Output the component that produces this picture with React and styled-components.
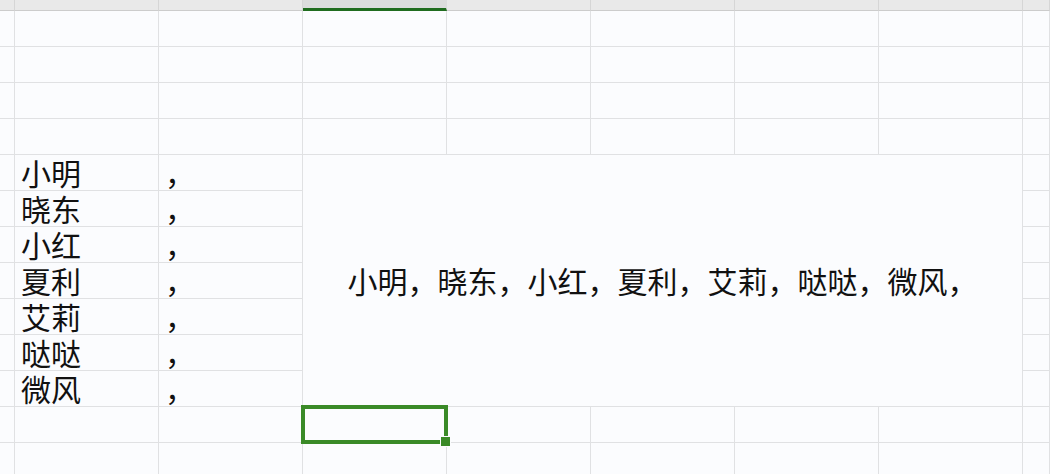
import React from "react";
import styled, { createGlobalStyle } from "styled-components";

const Global = createGlobalStyle`
  html, body { margin: 0; padding: 0; background: #fbfcfe; overflow: hidden; }
  body { font-family: "Noto Sans CJK SC", "Noto Sans", sans-serif; color: #111; }
`;

const COLS = 8; // A..H (H partial)
const ROWS = 13;

const Sheet = styled.div`
  display: grid;
  grid-template-columns: 15px repeat(7, 144px) 1fr;
  grid-template-rows: 11px repeat(${ROWS}, 36px);
  width: 1050px;
  height: 474px;
  overflow: hidden;
  background: #fbfcfe;
`;

const HeadCell = styled.div`
  box-sizing: border-box;
  background: ${(p) => (p.$active ? "#dcdddd" : "#e9e9e9")};
  border-right: 1px solid ${(p) => (p.$active ? "#dcdddd" : "#d6d6d6")};
  border-bottom: ${(p) => (p.$active ? "3px solid #1f6c1f" : "1px solid #cccccc")};
`;

const Cell = styled.div`
  box-sizing: border-box;
  position: relative;
  display: flex;
  align-items: center;
  justify-content: ${(p) => (p.$center ? "center" : "flex-start")};
  padding-left: ${(p) => (p.$center ? "0" : "6px")};
  border-right: 1px solid #e0e1e3;
  border-bottom: 1px solid #e0e1e3;
  background: #fbfcfe;
  font-size: 30px;
  line-height: 1.15;
  white-space: nowrap;
  color: #111;
  ${(p) => p.$area && `grid-area: ${p.$area};`}
`;

const Selection = styled.div`
  position: absolute;
  left: -2px;
  top: -2px;
  right: -2px;
  bottom: -2px;
  border: 4px solid #3a8a27;
  pointer-events: none;
  z-index: 2;
`;

const Handle = styled.div`
  position: absolute;
  right: -7px;
  bottom: -7px;
  width: 9px;
  height: 9px;
  background: #3a8a27;
  border: 1px solid #fbfcfe;
`;

const names = ["小明", "晓东", "小红", "夏利", "艾莉", "哒哒", "微风"];
const joined = names.map((n) => n + "，").join("");

export default function App() {
  const cells = [];
  cells.push(<HeadCell key="h0" />);
  for (let c = 0; c < COLS; c++) {
    cells.push(<HeadCell key={"h" + (c + 1)} $active={c === 2} />);
  }
  for (let r = 1; r <= ROWS; r++) {
    cells.push(<Cell key={`r${r}h`} />);
    for (let c = 0; c < COLS; c++) {
      const inMerge = r >= 5 && r <= 11 && c >= 2 && c <= 6;
      if (inMerge) {
        if (r === 5 && c === 2) {
          cells.push(
            <Cell key="merge" $center $area={`6 / 4 / 13 / 9`}>
              {joined}
            </Cell>
          );
        }
        continue;
      }
      let content = null;
      if (r >= 5 && r <= 11 && c === 0) content = names[r - 5];
      if (r >= 5 && r <= 11 && c === 1) content = "，";
      const selected = r === 12 && c === 2;
      cells.push(
        <Cell key={`r${r}c${c}`}>
          {content}
          {selected && (
            <Selection>
              <Handle />
            </Selection>
          )}
        </Cell>
      );
    }
  }
  return (
    <>
      <Global />
      <Sheet>{cells}</Sheet>
    </>
  );
}
